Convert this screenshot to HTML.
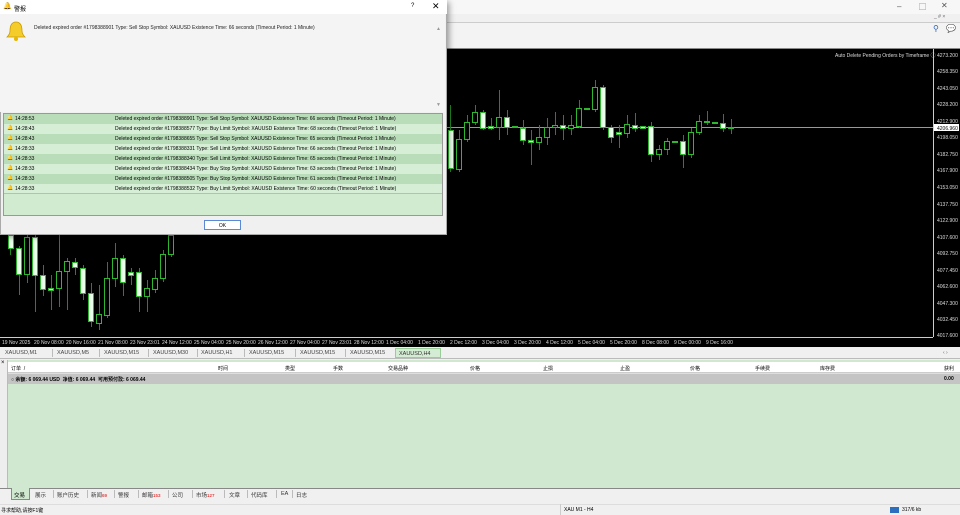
<!DOCTYPE html>
<html><head><meta charset="utf-8"><style>
*{margin:0;padding:0;box-sizing:border-box}
body{width:960px;height:515px;overflow:hidden;background:#f0f0f0;font-family:"Liberation Sans","Noto Sans CJK SC",sans-serif;font-size:5px;color:#000;position:relative}
.abs{position:absolute}
.t{font-size:5px;white-space:nowrap}
.st{position:absolute;top:350px;font-size:5.5px;color:#444;white-space:nowrap}
.bt{position:absolute;top:491px;font-size:5.5px;color:#333;white-space:nowrap}
.sep{position:absolute;width:1px;background:#bbb}
</style></head><body>
<!-- main title bar -->
<div class="abs" style="left:0;top:0;width:960px;height:14px;background:#f7f7f7"></div>
<div class="abs t" style="left:897px;top:2px;font-size:8px;color:#555">–</div>
<div class="abs t" style="left:919px;top:2px;font-size:7px;color:#555">▢</div>
<div class="abs t" style="left:941px;top:1px;font-size:8px;color:#555">✕</div>
<div class="abs" style="left:0;top:14px;width:960px;height:8px;background:#f0f0f0"></div>
<div class="abs t" style="left:934px;top:14px;color:#666">_ # ×</div>
<div class="abs" style="left:0;top:22px;width:960px;height:1px;background:#ccc"></div>
<div class="abs" style="left:0;top:23px;width:960px;height:25px;background:#f3f3f3"></div>
<div class="abs t" style="left:933px;top:24px;font-size:8px;color:#2a5fb0">⚲</div>
<div class="abs t" style="left:946px;top:24px;font-size:8px;color:#999">💬</div>
<!-- chart -->
<svg class="abs" style="left:0;top:48px" width="960" height="299" viewBox="0 48 960 299">
<rect x="0" y="48" width="960" height="299" fill="#000"/>
<rect x="0" y="48" width="960" height="1" fill="#888"/>
<line x1="933.5" y1="49" x2="933.5" y2="337" stroke="#ccc" stroke-width="1"/>
<line x1="0" y1="337.5" x2="933" y2="337.5" stroke="#ccc" stroke-width="1"/>
<line x1="0" y1="127.5" x2="933" y2="127.5" stroke="#999" stroke-width="1"/>
<g stroke="#1f8a1f" stroke-width="1">
<line x1="450.5" y1="105" x2="450.5" y2="172"/><line x1="459.5" y1="130" x2="459.5" y2="172"/><line x1="467.5" y1="115" x2="467.5" y2="142"/><line x1="475.5" y1="105" x2="475.5" y2="125"/><line x1="483.5" y1="110" x2="483.5" y2="130"/><line x1="491.5" y1="118" x2="491.5" y2="130"/><line x1="499.5" y1="90" x2="499.5" y2="140"/><line x1="507.5" y1="110" x2="507.5" y2="135"/><line x1="523.5" y1="120" x2="523.5" y2="145"/><line x1="531.5" y1="130" x2="531.5" y2="165"/><line x1="539.5" y1="125" x2="539.5" y2="150"/><line x1="547.5" y1="118" x2="547.5" y2="145"/><line x1="555.5" y1="112" x2="555.5" y2="135"/><line x1="563.5" y1="115" x2="563.5" y2="140"/><line x1="571.5" y1="115" x2="571.5" y2="135"/><line x1="579.5" y1="100" x2="579.5" y2="128"/><line x1="595.5" y1="80" x2="595.5" y2="112"/><line x1="603.5" y1="85" x2="603.5" y2="130"/><line x1="611.5" y1="125" x2="611.5" y2="143"/><line x1="619.5" y1="125" x2="619.5" y2="148"/><line x1="627.5" y1="115" x2="627.5" y2="138"/><line x1="635.5" y1="113" x2="635.5" y2="132"/><line x1="651.5" y1="122" x2="651.5" y2="162"/><line x1="659.5" y1="145" x2="659.5" y2="160"/><line x1="667.5" y1="138" x2="667.5" y2="155"/><line x1="683.5" y1="135" x2="683.5" y2="168"/><line x1="691.5" y1="128" x2="691.5" y2="158"/><line x1="699.5" y1="115" x2="699.5" y2="135"/><line x1="707.5" y1="111" x2="707.5" y2="125"/><line x1="723.5" y1="114" x2="723.5" y2="132"/><line x1="731.5" y1="119" x2="731.5" y2="134"/>
<line x1="10.5" y1="228" x2="10.5" y2="255"/><line x1="19.5" y1="246" x2="19.5" y2="295"/><line x1="27.5" y1="232" x2="27.5" y2="283"/><line x1="35.5" y1="232" x2="35.5" y2="312"/><line x1="43.5" y1="265" x2="43.5" y2="296"/><line x1="51.5" y1="275" x2="51.5" y2="310"/><line x1="59.5" y1="235" x2="59.5" y2="307"/><line x1="67.5" y1="258" x2="67.5" y2="310"/><line x1="75.5" y1="258" x2="75.5" y2="275"/><line x1="83.5" y1="265" x2="83.5" y2="300"/><line x1="91.5" y1="283" x2="91.5" y2="327"/><line x1="99.5" y1="285" x2="99.5" y2="330"/><line x1="107.5" y1="262" x2="107.5" y2="318"/><line x1="115.5" y1="243" x2="115.5" y2="287"/><line x1="123.5" y1="255" x2="123.5" y2="296"/><line x1="131.5" y1="268" x2="131.5" y2="285"/><line x1="139.5" y1="268" x2="139.5" y2="312"/><line x1="147.5" y1="280" x2="147.5" y2="312"/><line x1="155.5" y1="270" x2="155.5" y2="293"/><line x1="163.5" y1="250" x2="163.5" y2="282"/><line x1="171.5" y1="233" x2="171.5" y2="257"/>
</g>
<g stroke="#2eb82e" stroke-width="1">
<rect x="448.5" y="130.5" width="5" height="38" fill="#eaffea"/><rect x="456.5" y="139.5" width="5" height="30" fill="#000"/><rect x="464.5" y="122.5" width="5" height="17" fill="#000"/><rect x="472.5" y="112.5" width="5" height="10" fill="#000"/><rect x="480.5" y="112.5" width="5" height="16" fill="#eaffea"/><rect x="488.5" y="126.5" width="5" height="2" fill="#eaffea"/><rect x="496.5" y="117.5" width="5" height="10" fill="#000"/><rect x="504.5" y="117.5" width="5" height="10" fill="#eaffea"/><rect x="512.5" y="126.5" width="5" height="1" fill="#eaffea"/><rect x="520.5" y="128.5" width="5" height="12" fill="#eaffea"/><rect x="528.5" y="140.5" width="5" height="2" fill="#eaffea"/><rect x="536.5" y="137.5" width="5" height="5" fill="#000"/><rect x="544.5" y="127.5" width="5" height="10" fill="#000"/><rect x="552.5" y="125.5" width="5" height="2" fill="#000"/><rect x="560.5" y="125.5" width="5" height="3" fill="#eaffea"/><rect x="568.5" y="125.5" width="5" height="3" fill="#000"/><rect x="576.5" y="108.5" width="5" height="18" fill="#000"/><rect x="584.5" y="108.5" width="5" height="1" fill="#eaffea"/><rect x="592.5" y="87.5" width="5" height="22" fill="#000"/><rect x="600.5" y="87.5" width="5" height="40" fill="#eaffea"/><rect x="608.5" y="127.5" width="5" height="10" fill="#eaffea"/><rect x="616.5" y="132.5" width="5" height="2" fill="#eaffea"/><rect x="624.5" y="124.5" width="5" height="9" fill="#000"/><rect x="632.5" y="125.5" width="5" height="3" fill="#eaffea"/><rect x="640.5" y="126.5" width="5" height="2" fill="#eaffea"/><rect x="648.5" y="126.5" width="5" height="28" fill="#eaffea"/><rect x="656.5" y="149.5" width="5" height="5" fill="#000"/><rect x="664.5" y="141.5" width="5" height="8" fill="#000"/><rect x="672.5" y="141.5" width="5" height="1" fill="#eaffea"/><rect x="680.5" y="141.5" width="5" height="13" fill="#eaffea"/><rect x="688.5" y="132.5" width="5" height="22" fill="#000"/><rect x="696.5" y="121.5" width="5" height="11" fill="#000"/><rect x="704.5" y="121.5" width="5" height="1" fill="#eaffea"/><rect x="712.5" y="122.5" width="5" height="1" fill="#eaffea"/><rect x="720.5" y="123.5" width="5" height="5" fill="#eaffea"/><rect x="728.5" y="127.5" width="5" height="1" fill="#eaffea"/>
<rect x="8.5" y="235.5" width="5" height="13" fill="#eaffea"/><rect x="16.5" y="248.5" width="5" height="26" fill="#eaffea"/><rect x="24.5" y="237.5" width="5" height="37" fill="#000"/><rect x="32.5" y="237.5" width="5" height="38" fill="#eaffea"/><rect x="40.5" y="275.5" width="5" height="14" fill="#eaffea"/><rect x="48.5" y="288.5" width="5" height="2" fill="#eaffea"/><rect x="56.5" y="271.5" width="5" height="17" fill="#000"/><rect x="64.5" y="261.5" width="5" height="10" fill="#000"/><rect x="72.5" y="262.5" width="5" height="5" fill="#eaffea"/><rect x="80.5" y="268.5" width="5" height="25" fill="#eaffea"/><rect x="88.5" y="293.5" width="5" height="28" fill="#eaffea"/><rect x="96.5" y="314.5" width="5" height="9" fill="#000"/><rect x="104.5" y="278.5" width="5" height="37" fill="#000"/><rect x="112.5" y="258.5" width="5" height="20" fill="#000"/><rect x="120.5" y="258.5" width="5" height="24" fill="#eaffea"/><rect x="128.5" y="272.5" width="5" height="3" fill="#eaffea"/><rect x="136.5" y="272.5" width="5" height="24" fill="#eaffea"/><rect x="144.5" y="288.5" width="5" height="8" fill="#000"/><rect x="152.5" y="278.5" width="5" height="11" fill="#000"/><rect x="160.5" y="254.5" width="5" height="24" fill="#000"/><rect x="168.5" y="235.5" width="5" height="19" fill="#000"/>
</g>
<rect x="934" y="124" width="25" height="7" fill="#fff"/>
<g fill="#ddd" font-family="Liberation Sans" font-size="5">
<text x="937" y="57">4273.200</text><text x="937" y="73">4258.350</text><text x="937" y="90">4243.050</text><text x="937" y="106">4228.200</text><text x="937" y="123">4212.900</text><text x="937" y="130" fill="#000">4206.960</text><text x="937" y="139">4198.050</text><text x="937" y="156">4182.750</text><text x="937" y="172">4167.900</text><text x="937" y="189">4153.050</text><text x="937" y="206">4137.750</text><text x="937" y="222">4122.900</text><text x="937" y="239">4107.600</text><text x="937" y="255">4092.750</text><text x="937" y="272">4077.450</text><text x="937" y="288">4062.600</text><text x="937" y="305">4047.300</text><text x="937" y="321">4032.450</text><text x="937" y="337">4017.600</text>
<text x="835" y="57">Auto Delete Pending Orders by Timeframe ⓘ</text>
<text x="2" y="344">19 Nov 2025</text><text x="34" y="344">20 Nov 08:00</text><text x="66" y="344">20 Nov 16:00</text><text x="98" y="344">21 Nov 08:00</text><text x="130" y="344">23 Nov 23:01</text><text x="162" y="344">24 Nov 12:00</text><text x="194" y="344">25 Nov 04:00</text><text x="226" y="344">25 Nov 20:00</text><text x="258" y="344">26 Nov 12:00</text><text x="290" y="344">27 Nov 04:00</text><text x="322" y="344">27 Nov 23:01</text><text x="354" y="344">28 Nov 12:00</text><text x="386" y="344">1 Dec 04:00</text><text x="418" y="344">1 Dec 20:00</text><text x="450" y="344">2 Dec 12:00</text><text x="482" y="344">3 Dec 04:00</text><text x="514" y="344">3 Dec 20:00</text><text x="546" y="344">4 Dec 12:00</text><text x="578" y="344">5 Dec 04:00</text><text x="610" y="344">5 Dec 20:00</text><text x="642" y="344">8 Dec 08:00</text><text x="674" y="344">9 Dec 00:00</text><text x="706" y="344">9 Dec 16:00</text>
</g>
</svg>
<!-- symbol tabs -->
<div class="abs" style="left:0;top:347px;width:960px;height:12px;background:#f0f0f0;border-bottom:1px solid #bbb"></div>
<div class="st" style="left:5px">XAUUSD,M1</div><div class="sep" style="left:52px;top:349px;height:8px"></div>
<div class="st" style="left:57px">XAUUSD,M5</div><div class="sep" style="left:99px;top:349px;height:8px"></div>
<div class="st" style="left:104px">XAUUSD,M15</div><div class="sep" style="left:148px;top:349px;height:8px"></div>
<div class="st" style="left:153px">XAUUSD,M30</div><div class="sep" style="left:197px;top:349px;height:8px"></div>
<div class="st" style="left:201px">XAUUSD,H1</div><div class="sep" style="left:244px;top:349px;height:8px"></div>
<div class="st" style="left:249px">XAUUSD,M15</div><div class="sep" style="left:295px;top:349px;height:8px"></div>
<div class="st" style="left:300px">XAUUSD,M15</div><div class="sep" style="left:345px;top:349px;height:8px"></div>
<div class="st" style="left:350px">XAUUSD,M15</div>
<div class="abs t" style="left:395px;top:348px;width:46px;height:10px;background:#d3ecd3;border:1px solid #9c9;padding:2px 3px;color:#333;font-size:5.5px">XAUUSD,H4</div>
<div class="abs t" style="left:943px;top:350px;color:#666">‹ ›</div>
<!-- terminal -->
<div class="abs" style="left:0;top:360px;width:960px;height:128px;background:#cfe8cf"></div>
<div class="abs" style="left:0;top:360px;width:8px;height:140px;background:#eee;border-right:1px solid #bbb"></div>
<div class="abs t" style="left:1px;top:360px;font-size:6px">×</div>
<div class="abs" style="left:8px;top:362px;width:952px;height:11px;background:#fff;border-bottom:1px solid #ccc"></div>
<div class="abs t" style="left:11px;top:365px">订单 &nbsp;/</div>
<div class="abs t" style="left:218px;top:365px">时间</div><div class="abs t" style="left:285px;top:365px">类型</div><div class="abs t" style="left:333px;top:365px">手数</div><div class="abs t" style="left:388px;top:365px">交易品种</div><div class="abs t" style="left:470px;top:365px">价格</div><div class="abs t" style="left:543px;top:365px">止损</div><div class="abs t" style="left:620px;top:365px">止盈</div><div class="abs t" style="left:690px;top:365px">价格</div><div class="abs t" style="left:755px;top:365px">手续费</div><div class="abs t" style="left:820px;top:365px">库存费</div><div class="abs t" style="left:944px;top:365px">获利</div>
<div class="abs" style="left:8px;top:374px;width:952px;height:10px;background:#c4c4c4"></div>
<div class="abs t" style="left:11px;top:376px;font-weight:bold">○ 余额: 6 069.44 USD &nbsp;净值: 6 069.44 &nbsp;可用预付款: 6 069.44</div>
<div class="abs t" style="left:944px;top:376px;font-weight:bold">0.00</div>
<!-- bottom tabs -->
<div class="abs" style="left:0;top:488px;width:960px;height:13px;background:#f0f0f0;border-top:1px solid #888"></div>
<div class="abs t" style="left:11px;top:488px;height:12px;width:19px;background:#cfe8cf;border:1px solid #888;border-top:none;padding:3px 2px;font-size:5.5px">交易</div>
<div class="bt" style="left:35px">展示</div><div class="sep" style="left:53px;top:490px;height:8px"></div>
<div class="bt" style="left:57px">账户历史</div><div class="sep" style="left:87px;top:490px;height:8px"></div>
<div class="bt" style="left:91px">新闻<span style="color:#d00;font-size:4.5px">69</span></div><div class="sep" style="left:114px;top:490px;height:8px"></div>
<div class="bt" style="left:118px">警报</div><div class="sep" style="left:138px;top:490px;height:8px"></div>
<div class="bt" style="left:142px">邮箱<span style="color:#d00;font-size:4.5px">153</span></div><div class="sep" style="left:168px;top:490px;height:8px"></div>
<div class="bt" style="left:172px">公司</div><div class="sep" style="left:192px;top:490px;height:8px"></div>
<div class="bt" style="left:196px">市场<span style="color:#d00;font-size:4.5px">127</span></div><div class="sep" style="left:224px;top:490px;height:8px"></div>
<div class="bt" style="left:229px">文章</div><div class="sep" style="left:247px;top:490px;height:8px"></div>
<div class="bt" style="left:251px">代码库</div><div class="sep" style="left:276px;top:490px;height:8px"></div>
<div class="bt" style="left:281px">EA</div><div class="sep" style="left:292px;top:490px;height:8px"></div>
<div class="bt" style="left:296px">日志</div>
<!-- status bar -->
<div class="abs" style="left:0;top:504px;width:960px;height:11px;background:#f0f0f0;border-top:1px solid #ddd"></div>
<div class="abs t" style="left:1px;top:507px">寻求帮助,请按F1键</div>
<div class="abs t" style="left:564px;top:507px">XAU M1 - H4</div>
<div class="abs" style="left:560px;top:504px;width:1px;height:11px;background:#ccc"></div>
<div class="abs" style="left:890px;top:507px;width:9px;height:6px;background:#2b6fbf"></div>
<div class="abs t" style="left:902px;top:507px">317/6 kb</div>
<!-- dialog -->
<div class="abs" style="left:0;top:0;width:447px;height:235px;background:#f0f0f0;border:1px solid #aaa;box-shadow:2px 2px 6px rgba(0,0,0,.4)"></div>
<div class="abs" style="left:0;top:0;width:447px;height:14px;background:#fff"></div>
<div class="abs t" style="left:3px;top:2px;font-size:7px;color:#d9a400">🔔</div>
<div class="abs t" style="left:14px;top:4px;font-size:6px">警报</div>
<div class="abs t" style="left:411px;top:3px;font-size:6px">?</div>
<div class="abs t" style="left:432px;top:1px;font-size:9px">✕</div>
<div class="abs" style="left:0;top:14px;width:445px;height:98px;background:#f4f4f4"></div>
<svg class="abs" style="left:5px;top:20px" width="22" height="22" viewBox="0 0 22 22"><path d="M11 2 C6 2 5 7 5 11 C5 14 3 16 2 17 L20 17 C19 16 17 14 17 11 C17 7 16 2 11 2Z" fill="#f5cd2a" stroke="#c99a00" stroke-width=".8"/><circle cx="11" cy="19" r="2" fill="#e6b800"/></svg>
<div class="abs t" style="left:34px;top:25px;color:#222">Deleted expired order #1798388901 Type: Sell Stop Symbol: XAUUSD Existence Time: 66 seconds (Timeout Period: 1 Minute)</div>
<div class="abs t" style="left:436px;top:26px;color:#999">▲</div>
<div class="abs t" style="left:436px;top:102px;color:#999">▼</div>
<div class="abs" style="left:3px;top:113px;width:440px;height:103px;background:#d0ebd0;border:1px solid #999"></div>
<div class="abs" style="left:4px;top:114px;width:438px;height:80px;font-size:5px">
<div style="height:10px;background:#b9dcb9;position:relative"><span style="position:absolute;left:3px;top:1px;color:#d9a400">🔔</span><span style="position:absolute;left:11px;top:2px">14:28:53</span><span style="position:absolute;left:111px;top:2px">Deleted expired order #1798388901 Type: Sell Stop Symbol: XAUUSD Existence Time: 66 seconds (Timeout Period: 1 Minute)</span></div>
<div style="height:10px;background:#d6eed6;position:relative"><span style="position:absolute;left:3px;top:1px;color:#d9a400">🔔</span><span style="position:absolute;left:11px;top:2px">14:28:43</span><span style="position:absolute;left:111px;top:2px">Deleted expired order #1798388577 Type: Buy Limit Symbol: XAUUSD Existence Time: 68 seconds (Timeout Period: 1 Minute)</span></div>
<div style="height:10px;background:#b9dcb9;position:relative"><span style="position:absolute;left:3px;top:1px;color:#d9a400">🔔</span><span style="position:absolute;left:11px;top:2px">14:28:43</span><span style="position:absolute;left:111px;top:2px">Deleted expired order #1798388655 Type: Sell Stop Symbol: XAUUSD Existence Time: 65 seconds (Timeout Period: 1 Minute)</span></div>
<div style="height:10px;background:#d6eed6;position:relative"><span style="position:absolute;left:3px;top:1px;color:#d9a400">🔔</span><span style="position:absolute;left:11px;top:2px">14:28:33</span><span style="position:absolute;left:111px;top:2px">Deleted expired order #1798388331 Type: Sell Limit Symbol: XAUUSD Existence Time: 66 seconds (Timeout Period: 1 Minute)</span></div>
<div style="height:10px;background:#b9dcb9;position:relative"><span style="position:absolute;left:3px;top:1px;color:#d9a400">🔔</span><span style="position:absolute;left:11px;top:2px">14:28:33</span><span style="position:absolute;left:111px;top:2px">Deleted expired order #1798388340 Type: Sell Limit Symbol: XAUUSD Existence Time: 65 seconds (Timeout Period: 1 Minute)</span></div>
<div style="height:10px;background:#d6eed6;position:relative"><span style="position:absolute;left:3px;top:1px;color:#d9a400">🔔</span><span style="position:absolute;left:11px;top:2px">14:28:33</span><span style="position:absolute;left:111px;top:2px">Deleted expired order #1798388434 Type: Buy Stop Symbol: XAUUSD Existence Time: 63 seconds (Timeout Period: 1 Minute)</span></div>
<div style="height:10px;background:#b9dcb9;position:relative"><span style="position:absolute;left:3px;top:1px;color:#d9a400">🔔</span><span style="position:absolute;left:11px;top:2px">14:28:33</span><span style="position:absolute;left:111px;top:2px">Deleted expired order #1798388505 Type: Buy Stop Symbol: XAUUSD Existence Time: 61 seconds (Timeout Period: 1 Minute)</span></div>
<div style="height:10px;background:#d6eed6;position:relative;border-bottom:1px solid #bbb"><span style="position:absolute;left:3px;top:1px;color:#d9a400">🔔</span><span style="position:absolute;left:11px;top:2px">14:28:33</span><span style="position:absolute;left:111px;top:2px">Deleted expired order #1798388532 Type: Buy Limit Symbol: XAUUSD Existence Time: 60 seconds (Timeout Period: 1 Minute)</span></div>
</div>
<div class="abs t" style="left:204px;top:220px;width:37px;height:10px;background:#fff;border:1px solid #5a8ad6;text-align:center;padding-top:2px">OK</div>
</body></html>
